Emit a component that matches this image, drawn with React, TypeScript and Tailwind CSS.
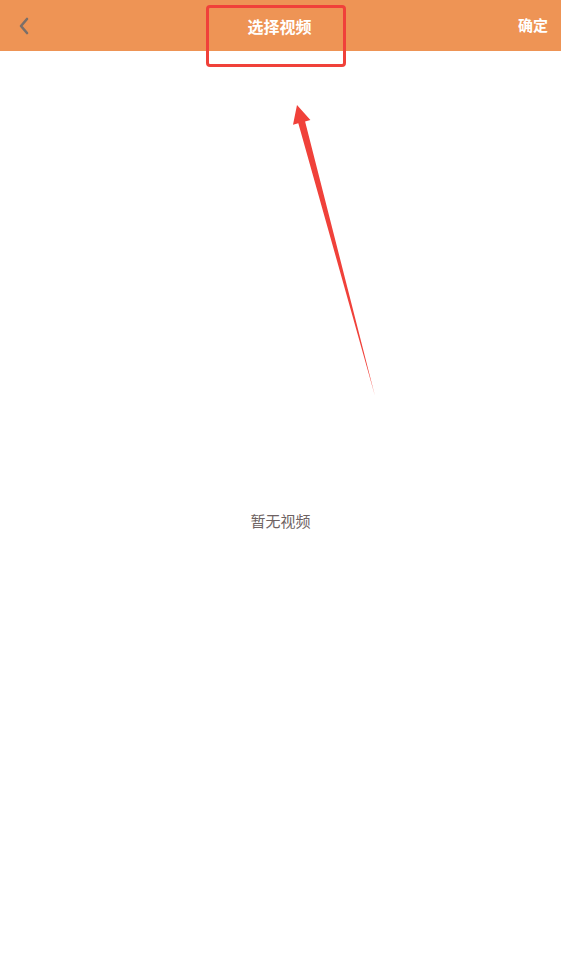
export default function App() {
  return (
    <div
      className="relative w-[561px] h-[970px] bg-white overflow-hidden"
      style={{ fontFamily: '"Noto Sans CJK SC", "Noto Sans", sans-serif' }}
    >
      <header className="h-[51px] bg-[#ee9455] flex items-center justify-between px-[16px]">
        <svg width="14" height="20" viewBox="0 0 14 20" className="ml-[1px]">
          <path d="M10 3 L4 10 L10 17" fill="none" stroke="#7a6f69" strokeWidth="2.6" strokeLinecap="round" strokeLinejoin="round" />
        </svg>
        <h1 className="text-white text-[16px] font-bold ml-[10px]">选择视频</h1>
        <button className="text-white text-[15px] font-bold -mr-[3px]">确定</button>
      </header>

      <div className="flex justify-center pt-[459px]">
        <p className="text-[15px] text-[#6e6262]">暂无视频</p>
      </div>

      {/* annotation overlay */}
      <div className="absolute left-[206px] top-[5px] w-[140px] h-[62px] border-[3px] border-[#f0413a] rounded-[4px]" />
      <svg className="absolute left-0 top-0" width="561" height="970">
        <polygon
          points="297,105 310.4,120.1 305.1,121.5 375,396 298.3,123.3 293,124.7"
          fill="#f0413a"
        />
      </svg>
    </div>
  );
}
